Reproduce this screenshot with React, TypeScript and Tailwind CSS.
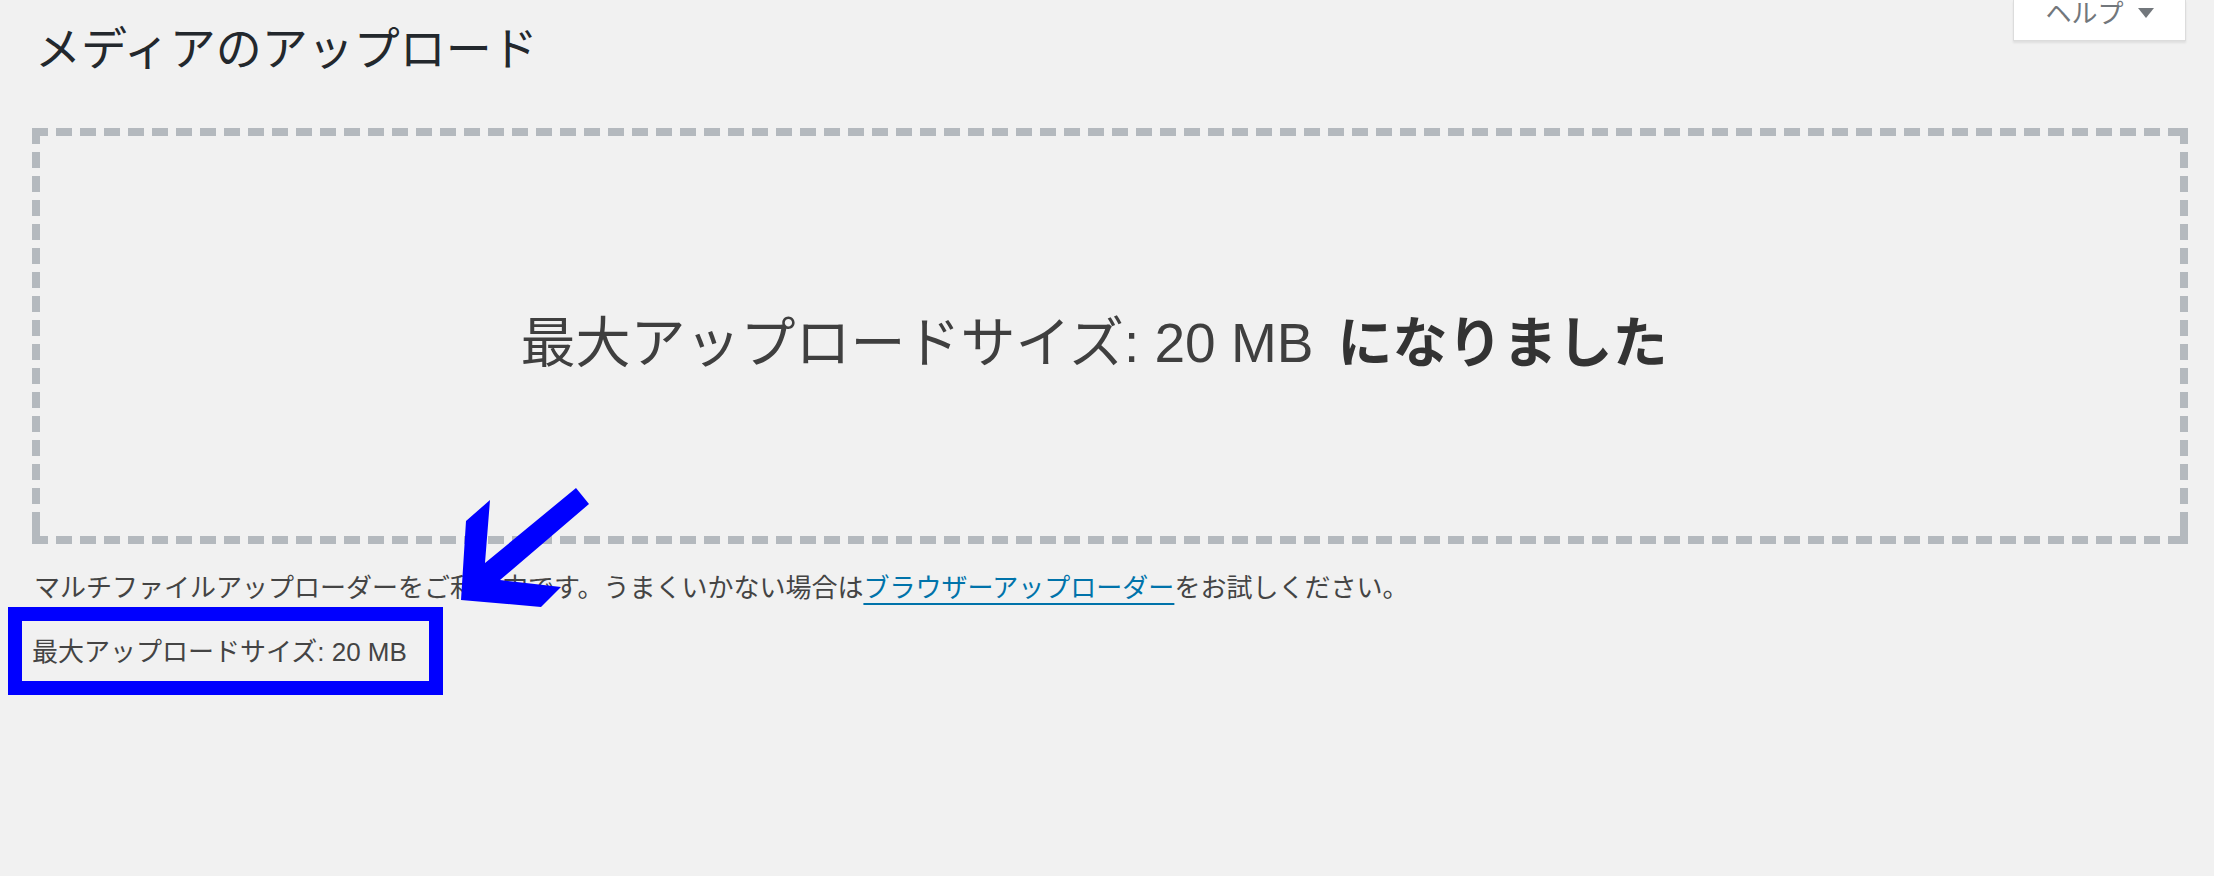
import React from 'react';

const font = 'font-["Liberation_Sans","Noto_Sans_CJK_JP",sans-serif]';

// dashed drop zone border: 8px thick, 16px dash / 8px gap, solid corners
const dashed =
  '[background-image:linear-gradient(90deg,#b4b9be_16px,transparent_0),linear-gradient(90deg,#b4b9be_16px,transparent_0),linear-gradient(180deg,#b4b9be_16px,transparent_0),linear-gradient(180deg,#b4b9be_16px,transparent_0),linear-gradient(#b4b9be,#b4b9be),linear-gradient(#b4b9be,#b4b9be),linear-gradient(#b4b9be,#b4b9be),linear-gradient(#b4b9be,#b4b9be)] ' +
  '[background-size:24px_8px,24px_8px,8px_24px,8px_24px,16px_8px,16px_8px,8px_16px,8px_16px] ' +
  '[background-position:left_top,left_bottom,left_top,right_top,right_top,right_bottom,left_bottom,right_bottom] ' +
  '[background-repeat:repeat-x,repeat-x,repeat-y,repeat-y,no-repeat,no-repeat,no-repeat,no-repeat]';

const HelpTab = () => (
  <div className="absolute right-[28px] top-0 flex h-[41px] w-[173px] items-start justify-center gap-[14px] border-x border-b border-[#dcdcdc] bg-white shadow-[0_2px_2px_rgba(0,0,0,0.08)]">
    <span className="-mt-[1px] text-[26px] leading-[30px] text-[#72777c]">ヘルプ</span>
    <span className="mt-[8px] h-0 w-0 border-x-[8px] border-t-[10px] border-x-transparent border-t-[#72777c]" />
  </div>
);

const Arrow = () => (
  <svg className="absolute left-0 top-0" width="620" height="620" viewBox="0 0 620 620">
    <polygon
      fill="#0000ff"
      points="461,600 466,521 490,500 485,563 576,488 589,504 500,580 561,587 541,607"
    />
  </svg>
);

export default function App() {
  return (
    <div className={`relative min-h-[876px] bg-[#f1f1f1] pl-8 pr-[26px] ${font}`}>
      <HelpTab />

      <h1 className="pl-[3px] pt-[19px] text-[46px] font-normal leading-[60px] text-[#23282d]">
        メディアのアップロード
      </h1>

      <div className={`mt-[49px] flex h-[416px] items-center justify-center pr-8 pt-[14px] ${dashed}`}>
        <p className="text-[55px] leading-[70px] text-[#3f3f3f]">
          最大アップロードサイズ: 20 MB
          <span className="ml-[24px] font-bold text-[#333]">になりました</span>
        </p>
      </div>

      <p className="mt-[25px] pl-[2px] text-[26px] leading-[38px] text-[#444]">
        マルチファイルアップローダーをご利用中です。うまくいかない場合は
        <a className="text-[#0073aa] underline decoration-2 underline-offset-[6px]" href="#">
          ブラウザーアップローダー
        </a>
        をお試しください。
      </p>

      <p className="mt-[26px] text-[26px] leading-[38px] text-[#444]">最大アップロードサイズ: 20 MB</p>

      {/* annotation overlays */}
      <div className="absolute left-[8px] top-[607px] h-[88px] w-[435px] border-[14px] border-[#0000ff]" />
      <Arrow />
    </div>
  );
}
